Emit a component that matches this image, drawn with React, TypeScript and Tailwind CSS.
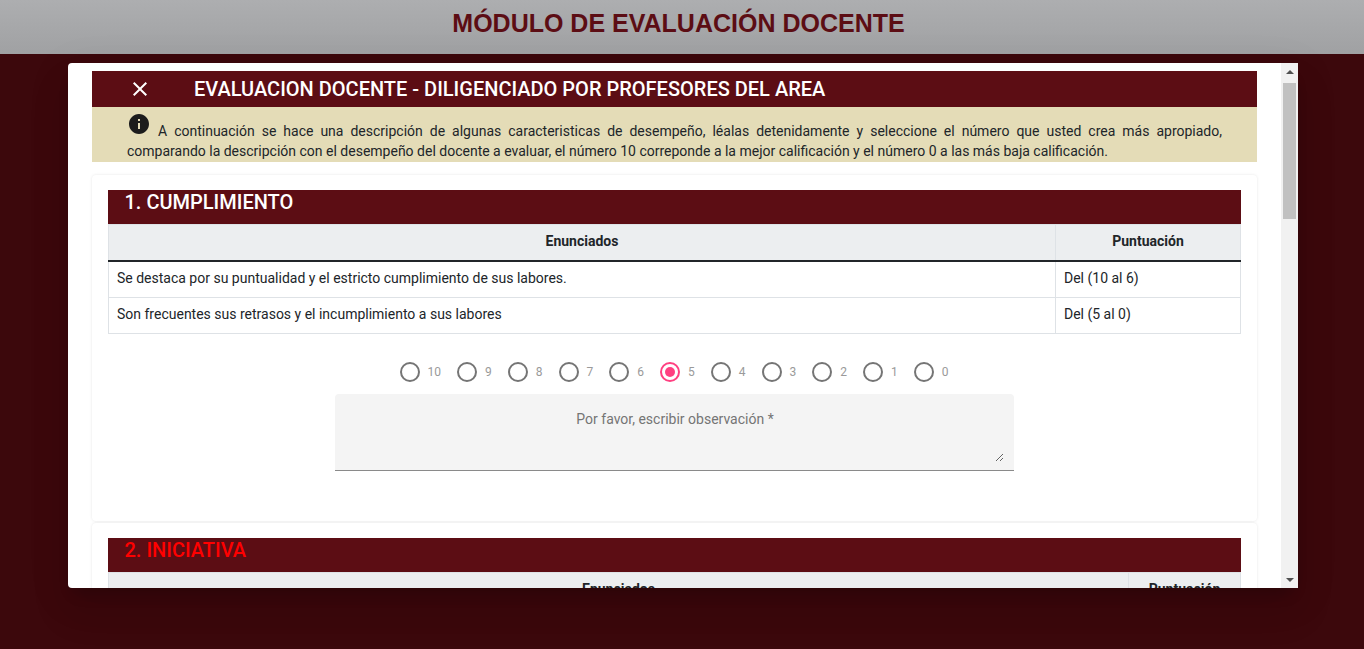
const ROBOTO = "font-['Roboto',sans-serif]";

function Radio({ label, checked = false }: { label: string; checked?: boolean }) {
  return (
    <div className="flex items-center gap-2">
      <span
        className={
          checked
            ? "flex h-5 w-5 items-center justify-center rounded-full border-2 border-[#ff4081]"
            : "flex h-5 w-5 items-center justify-center rounded-full border-2 border-[#757575]"
        }
      >
        {checked && <span className="h-2.5 w-2.5 rounded-full bg-[#ff4081]" />}
      </span>
      <span className="text-xs text-[#9a9a9a]">{label}</span>
    </div>
  );
}

function Section({
  title,
  titleClass,
  firstColClass,
  secondColClass,
  rows,
  children,
  cardClass,
}: {
  title: string;
  titleClass: string;
  firstColClass: string;
  secondColClass: string;
  rows: [string, string][];
  children?: React.ReactNode;
  cardClass: string;
}) {
  return (
    <section className={"rounded-[4px] bg-white px-4 pt-[15px] shadow-[0_0_3px_rgba(0,0,0,0.1)] " + cardClass}>
      <h2 className={"h-[34px] bg-[#5c0d14] pl-[16.5px] text-xl leading-[25px] font-medium " + titleClass}>{title}</h2>
      <table className="w-full table-fixed border-collapse text-sm text-[#212529]">
        <thead>
          <tr className="h-[36px] bg-[#eceef0] font-bold">
            <th className={"border border-b-2 border-[#dee2e6] border-b-[#212529] pb-[2px] text-center " + firstColClass}>Enunciados</th>
            <th className={"border border-b-2 border-[#dee2e6] border-b-[#212529] pb-[2px] text-center " + secondColClass}>Puntuación</th>
          </tr>
        </thead>
        <tbody>
          {rows.map(([a, b]) => (
            <tr key={a} className="h-9 first:h-[37px]">
              <td className="border border-[#dee2e6] px-2 pt-[6px] align-top">{a}</td>
              <td className="border border-[#dee2e6] px-2 pt-[6px] align-top">{b}</td>
            </tr>
          ))}
        </tbody>
      </table>
      {children}
    </section>
  );
}

export default function App() {
  const scores = ["10", "9", "8", "7", "6", "5", "4", "3", "2", "1", "0"];
  return (
    <div className={"flex h-screen flex-col overflow-hidden bg-[#3c080c] " + ROBOTO}>
      <header className="flex h-[54px] shrink-0 items-start justify-center bg-gradient-to-b from-[#adaeb0] to-[#a0a1a3] pr-[7px]">
        <h1 className="mt-[5px] text-[25px] leading-9 font-bold text-[#5c0d14] font-['Liberation_Sans',sans-serif]">
          MÓDULO DE EVALUACIÓN DOCENTE
        </h1>
      </header>

      <div className="mt-[9px] mr-[66px] ml-[68px] flex h-[525px] overflow-hidden rounded-l-[4px] bg-white shadow-[0_11px_15px_-7px_rgba(0,0,0,0.2),0_24px_38px_3px_rgba(0,0,0,0.08),0_9px_46px_8px_rgba(0,0,0,0.04)]">
        <main className="min-w-0 flex-1 overflow-hidden pt-2 pr-6 pl-6">
          <div className="flex h-9 items-center bg-[#5c0d14] text-white">
            <svg viewBox="0 0 24 24" className="ml-9 h-6 w-6 shrink-0" fill="currentColor">
              <path d="M19 6.41L17.59 5 12 10.59 6.41 5 5 6.41 10.59 12 5 17.59 6.41 19 12 13.41 17.59 19 19 17.59 13.41 12z" />
            </svg>
            <span className="ml-[42px] text-xl leading-6 font-medium">
              EVALUACION DOCENTE - DILIGENCIADO POR PROFESORES DEL AREA
            </span>
          </div>

          <p className="mb-[13px] h-[55px] bg-[#e4dcb7] px-[35px] pt-[5px] text-justify text-sm leading-5 text-[#212529]">
            <svg viewBox="0 0 24 24" className="mr-[7px] inline-block h-6 w-6 align-baseline" fill="#1c1c1c">
              <path d="M12 2C6.48 2 2 6.48 2 12s4.48 10 10 10 10-4.48 10-10S17.52 2 12 2zm1 15h-2v-6h2v6zm0-8h-2V7h2v2z" />
            </svg>
            A continuación se hace una descripción de algunas caracteristicas de desempeño, léalas detenidamente y seleccione el número que usted crea más apropiado, comparando la descripción con el desempeño del docente a evaluar, el número 10 correponde a la mejor calificación y el número 0 a las más baja calificación.
          </p>

          <Section
            title="1. CUMPLIMIENTO"
            titleClass="text-white"
            firstColClass="w-[947px]"
            secondColClass="w-[185px]"
            cardClass="h-[346px]"
            rows={[
              ["Se destaca por su puntualidad y el estricto cumplimiento de sus labores.", "Del (10 al 6)"],
              ["Son frecuentes sus retrasos y el incumplimiento a sus labores", "Del (5 al 0)"],
            ]}
          >
            <div className="mt-[28px] flex justify-center gap-4 pr-[1px]">
              {scores.map((s) => (
                <Radio key={s} label={s} checked={s === "5"} />
              ))}
            </div>
            <div className="mx-auto mt-[12px] flex h-[77px] w-[679px] items-start rounded-t-[4px] border-b border-[#8a8a8a] bg-[#f4f4f4] pt-[15px] pr-[10px] pl-[11px]">
              <textarea
                className="h-[53px] w-full bg-transparent text-center text-sm leading-5 text-[#6e6e6e] outline-none placeholder:text-[#757575]"
                placeholder="Por favor, escribir observación *"
              />
            </div>
          </Section>

          <Section
            title="2. INICIATIVA"
            titleClass="text-[#ff0000]"
            firstColClass="w-[1020px]"
            secondColClass="w-[112px]"
            cardClass="mt-[2px]"
            rows={[]}
          />
        </main>

        <aside className="flex w-[17px] shrink-0 flex-col bg-[#f1f1f1]">
          <div className="flex h-[17px] shrink-0 items-center justify-center">
            <span className="h-0 w-0 border-x-[4px] border-b-[4px] border-x-transparent border-b-[#505050]" />
          </div>
          <div className="mx-[2px] mt-[3px] h-[136px] shrink-0 bg-[#c1c1c1]" />
          <div className="flex-1" />
          <div className="flex h-[17px] shrink-0 items-center justify-center">
            <span className="h-0 w-0 border-x-[4px] border-t-[4px] border-x-transparent border-t-[#505050]" />
          </div>
        </aside>
      </div>
    </div>
  );
}
